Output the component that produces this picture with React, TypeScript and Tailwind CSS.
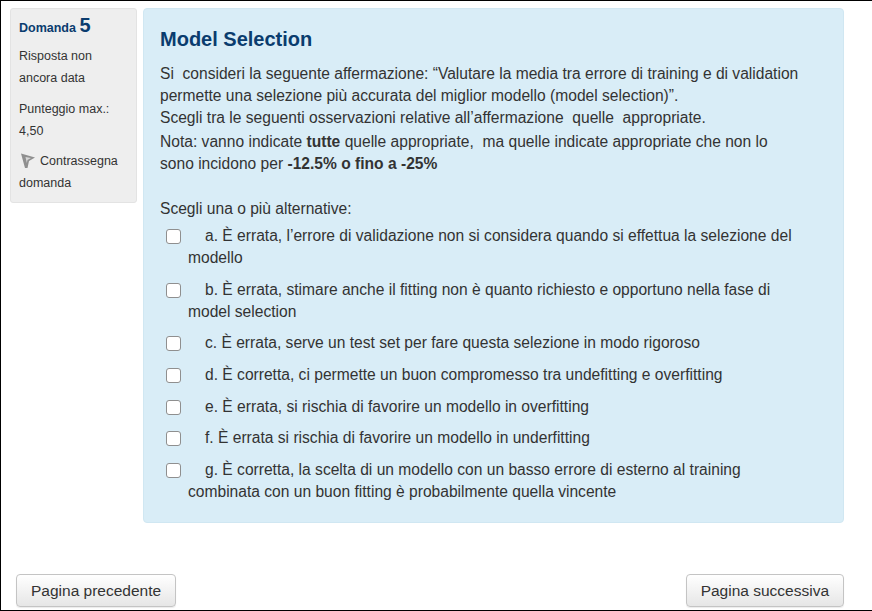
import React from 'react';

const options = [
  { letter: 'a', text: 'È errata, l’errore di validazione non si considera quando si effettua la selezione del modello' },
  { letter: 'b', text: 'È errata, stimare anche il fitting non è quanto richiesto e opportuno nella fase di model selection' },
  { letter: 'c', text: 'È errata, serve un test set per fare questa selezione in modo rigoroso' },
  { letter: 'd', text: 'È corretta, ci permette un buon compromesso tra undefitting e overfitting' },
  { letter: 'e', text: 'È errata, si rischia di favorire un modello in overfitting' },
  { letter: 'f', text: 'È errata si rischia di favorire un modello in underfitting' },
  { letter: 'g', text: 'È corretta, la scelta di un modello con un basso errore di esterno al training combinata con un buon fitting è probabilmente quella vincente' },
];

const FlagIcon = () => (
  <svg width="14" height="16" viewBox="0 0 14 16" className="inline-block ml-[2px] mr-[5px] -mt-[2px] align-middle">
    <path d="M0 0.5 L14 4.5 L8 8 L6.5 15 L4 15 Z" fill="#8f8f8f" />
    <path d="M4.5 4 L10 5 L6.5 7 L5.8 10 Z" fill="#d6d6d6" />
  </svg>
);

const NavButton = ({ label }: { label: string }) => (
  <button className="h-[33px] px-[14px] rounded-[4px] border border-[#c4c4c4] bg-gradient-to-b from-white to-[#e6e6e6] text-[15.5px] text-[#333] shadow-[0_1px_1px_rgba(0,0,0,0.08)]">
    {label}
  </button>
);

export default function App() {
  return (
    <div className="h-[611px] w-[872px] overflow-hidden bg-white border-t border-l border-b border-black font-['Liberation_Sans',Arial,sans-serif] text-[#333]">
      <div className="flex items-start gap-[6px] pt-[7px] pl-[9px] pr-[28px]">
        {/* Question info */}
        <div className="w-[127px] h-[195px] shrink-0 rounded-[3px] bg-[#eeeeee] border border-[#e3e3e3] pl-[8px] pt-[3px] text-[12.5px] leading-[22px]">
          <h3 className="font-bold text-[#0a3c6e] text-[12.5px] leading-[26px]">
            Domanda <span className="text-[20px]">5</span>
          </h3>
          <div className="mt-[4px]">Risposta non<br />ancora data</div>
          <div className="mt-[9px]">Punteggio max.:<br />4,50</div>
          <div className="mt-[8px]"><FlagIcon />Contrassegna<br />domanda</div>
        </div>

        {/* Question body */}
        <div className="w-[701px] h-[515px] shrink-0 rounded-[4px] bg-[#d9edf7] border border-[#d0e7f2] pl-[16px] pt-[18px] text-[15.6px] leading-[22px]">
          <h2 className="font-bold text-[#0a3c6e] text-[20px] leading-[24px] mb-[12px]">Model Selection</h2>
          <div className="w-[642px]">
            <p>
              Si&nbsp; consideri la seguente affermazione: “Valutare la media tra errore di training e di validation permette una selezione più accurata del miglior modello (model selection)”.<br />
              Scegli tra le seguenti osservazioni relative all’affermazione&nbsp; quelle&nbsp; appropriate.
            </p>
            <p className="mt-[2px]">
              Nota: vanno indicate <b>tutte</b> quelle appropriate,&nbsp; ma quelle indicate appropriate che non lo sono incidono per <b>-12.5% o fino a -25%</b>
            </p>
            <p className="mt-[23px]">Scegli una o più alternative:</p>
            <div className="mt-[5px] flex flex-col gap-[9.7px]">
              {options.map((o) => (
                <label key={o.letter} className="flex items-start">
                  <span className="mt-[4px] ml-[6px] w-[15px] h-[15px] shrink-0 rounded-[3px] border border-[#8f8f8f] bg-white" />
                  <span className="ml-[7px] flex-1 indent-[17px]">{o.letter}. {o.text}</span>
                </label>
              ))}
            </div>
          </div>
        </div>
      </div>

      <div className="mt-[51px] flex justify-between pl-[15px] pr-[28px]">
        <NavButton label="Pagina precedente" />
        <NavButton label="Pagina successiva" />
      </div>
    </div>
  );
}
